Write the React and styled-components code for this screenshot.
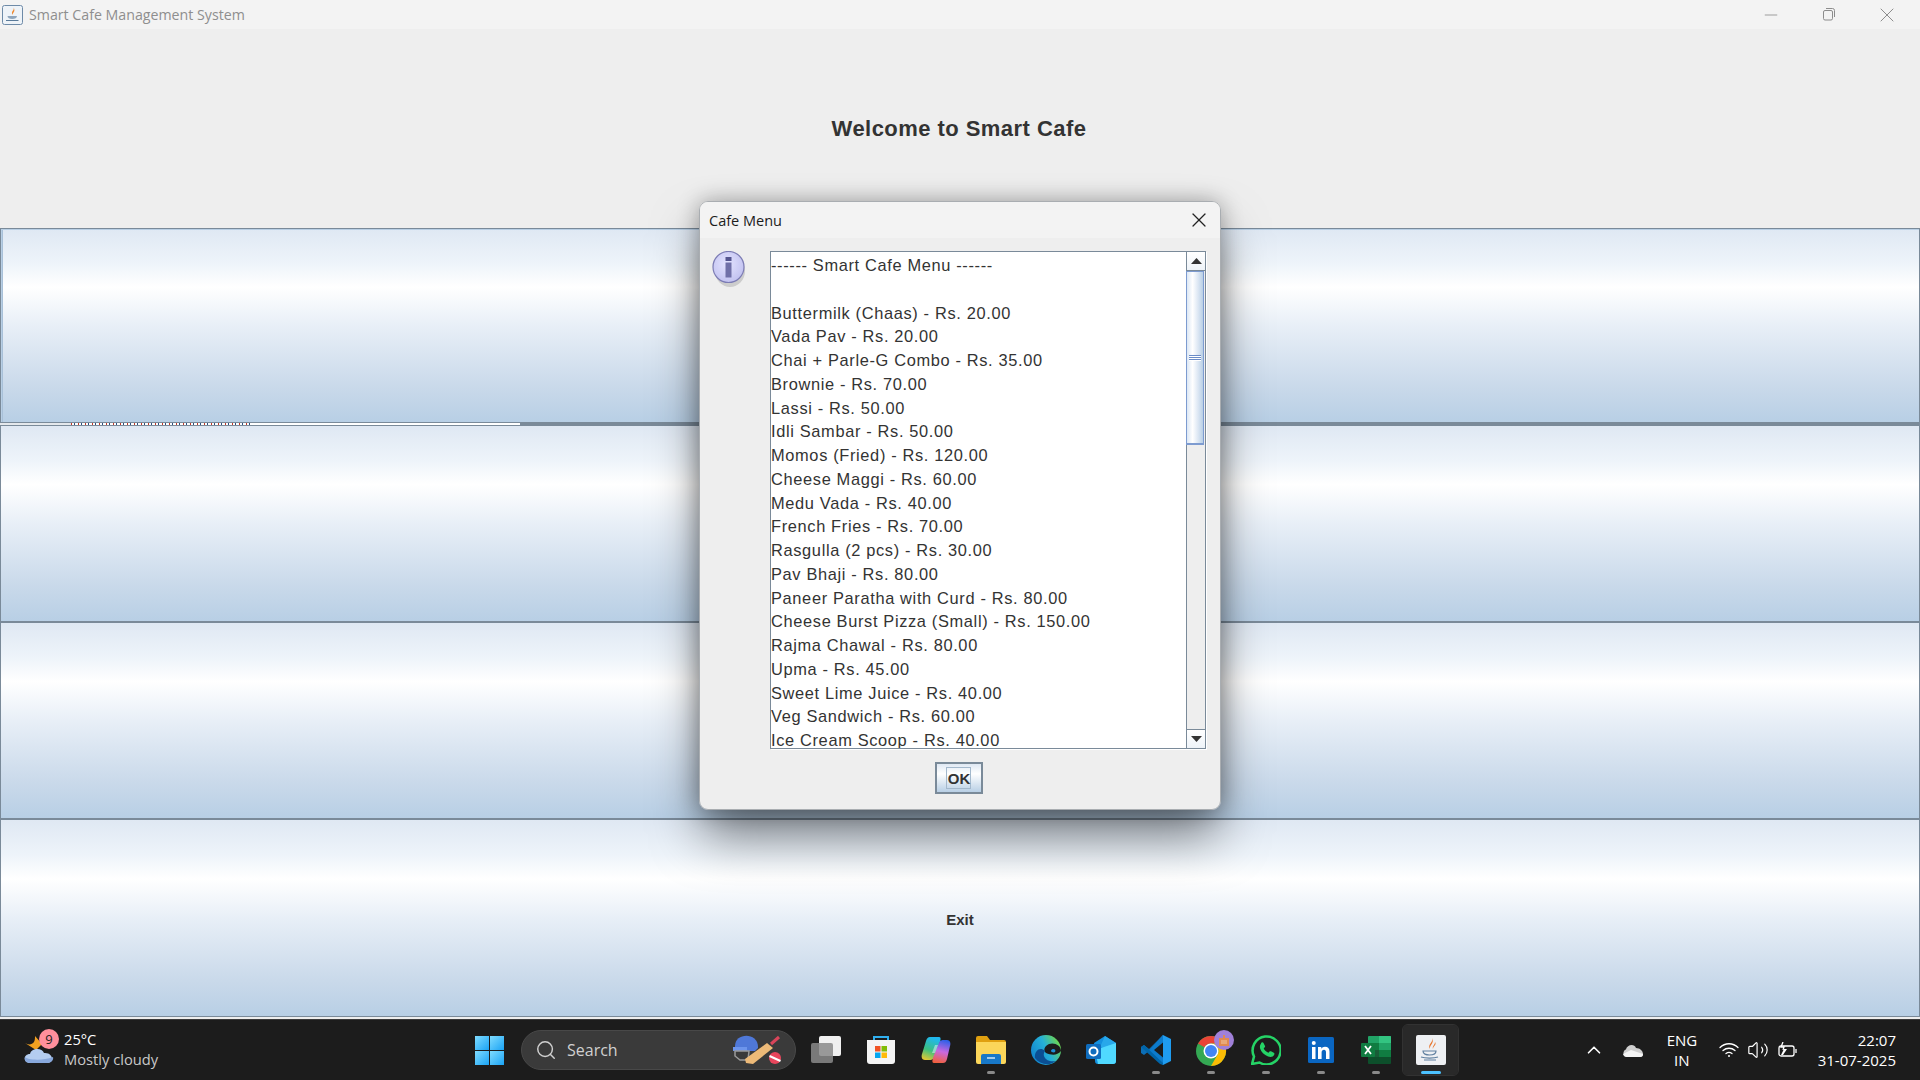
import React from "react";
import styled, { createGlobalStyle } from "styled-components";
import { X, Minus, Search as SearchIcon, ChevronUp, Volume2 } from "lucide-react";

const Global = createGlobalStyle`
  html, body { margin: 0; padding: 0; width: 1920px; height: 1080px; overflow: hidden; background: #eeeeee; }
  * { box-sizing: border-box; }
`;

const Screen = styled.div`
  width: 1920px; height: 1080px; display: flex; flex-direction: column; position: relative; overflow: hidden;
  font-family: "Liberation Sans", Arial, sans-serif;
`;
const TitleBar = styled.div`
  height: 29px; flex: none; background: #f3f3f3; display: flex; align-items: center; padding-left: 2px;
`;
const TitleText = styled.span`
  margin-left: 6px; font-family: "Open Sans", "Noto Sans", sans-serif; font-size: 14.2px; color: #8e8e8e;
`;
const WinControls = styled.div`
  margin-left: auto; display: flex; align-items: center; color: #8c8c8c; padding-right: 4px;
`;
const WinBtn = styled.div`
  width: 58px; height: 29px; display: flex; align-items: center; justify-content: center;
`;
const Content = styled.div`flex: 1; display: flex; flex-direction: column; min-height: 0; background: #eeeeee;`;
const Heading = styled.div`
  height: 199px; flex: none; display: flex; align-items: center; justify-content: center;
  font-size: 22px; font-weight: 700; color: #333333; padding-right: 2px;
  letter-spacing: 0.45px;
`;
const Metal = styled.div`
  height: ${p => p.$h}px; flex: none; display: flex; align-items: center; justify-content: center;
  border: 1px solid #7a8a99; padding-top: 3px;
  box-shadow: ${p => (p.$first ? "inset 1px 1px 0 #b8cfe5, inset 2px 0 0 #a8c0d8" : "none")};
  background: linear-gradient(to bottom, #dfe8f3 0%, #eef4fa 18%, #ffffff 30%, #e8eff7 50%, #c9d9ea 82%, #b8cfe5 100%);
  font-size: 15px; font-weight: 700; color: #333333;
`;
const Buttons = styled.div`display: flex; flex-direction: column;`;
const Strip = styled.div`height: 2px; flex: none; display: flex; background: #7a8a99;`;
const StripPart = styled.div`
  height: 2px; flex: none; width: ${p => p.$w}px;
  background: ${p => (p.$text
    ? "repeating-linear-gradient(to right, #c0392b 0 1px, #ffffff 1px 3px, #2c4f80 3px 4px, #ffffff 4px 7px)"
    : p.$dim ? "#e4e8ec" : "#ffffff")};
`;
const Dialog = styled.div`
  position: absolute; left: 699px; top: 201px; width: 522px; height: 609px;
  background: #eeeeee; border: 1px solid #a9adb1; border-radius: 9px; overflow: hidden;
  display: flex; flex-direction: column;
`;
const ShadowLayer = styled.div`
  position: absolute; left: 699px; top: 201px; width: 522px; height: 609px; border-radius: 9px;
  box-shadow: 0 28px 50px -4px rgba(0,0,0,0.5), 0 0 22px rgba(0,0,0,0.3);
`;
const DialogHead = styled.div`
  height: 36px; flex: none; background: #f3f3f3; display: flex; align-items: center; justify-content: space-between;
  padding: 0 9px 0 9px;
  font-family: "Open Sans", "Noto Sans", sans-serif; font-size: 14.5px; color: #1c1c1c;
`;
const DialogBody = styled.div`
  flex: 1; display: flex; min-height: 0; padding: 13px 14px 0 12px;
`;
const IconCol = styled.div`width: 58px; flex: none;`;
const Main = styled.div`flex: 1; min-width: 0; display: flex; flex-direction: column;`;
const ScrollPane = styled.div`
  width: 436px; height: 498px; flex: none; border: 1px solid #7a8a99; background: #fff; display: flex;
  box-shadow: 1px 1px 0 #ffffff;
`;
const TextArea = styled.div`
  flex: 1; overflow: hidden; padding: 2px 0 0 0; font-size: 16.4px; letter-spacing: 0.65px; color: #333333;
`;
const Line = styled.div`height: 23.75px; line-height: 23.75px; white-space: pre;`;
const ScrollBar = styled.div`
  width: 19px; flex: none; background: #eeeeee; border-left: 1px solid #7a8a99; display: flex; flex-direction: column;
`;
const Arrow = styled.div`
  height: 19px; flex: none; background: linear-gradient(to bottom, #ffffff, #eef3f8); display: flex; align-items: center; justify-content: center;
  border-bottom: ${p => (p.$down ? "none" : "1px solid #7a8a99")};
  border-top: ${p => (p.$down ? "1px solid #7a8a99" : "none")};
`;
const Thumb = styled.div`
  height: 174px; flex: none; border: 1px solid #7d9bd0; border-bottom-width: 2px;
  margin-left: -1px; width: 18px;
  background: linear-gradient(to right, #dde8f5 0%, #ffffff 35%, #dbe6f3 70%, #b8cfe5 100%);
  display: flex; flex-direction: column; align-items: center; justify-content: center; gap: 1px;
`;
const Grip = styled.div`width: 12px; height: 1px; background: #6a8cc8; box-shadow: 0 1px 0 #fff;`;
const Track = styled.div`flex: 1;`;
const OkRow = styled.div`
  height: 0; flex: 1; display: flex; align-items: flex-start; justify-content: center; padding: 13px 0 0 0; margin-left: -59px;
`;
const OkBtn = styled.div`
  width: 48px; height: 32px; border: 2px solid #7a8a99; display: flex; align-items: center; justify-content: center;
  background: linear-gradient(to bottom, #dfe8f3, #ffffff 35%, #b8cfe5);
`;
const OkText = styled.span`
  font-size: 15px; font-weight: 700; color: #333333; border: 1px solid #a3b8cc; padding: 3px 0 1px 1px; line-height: 16px;
`;
const Taskbar = styled.div`
  position: absolute; left: 0; right: 0; bottom: 0; height: 61px; background: #1c1c1c; border-top: 1px solid #3a3a3a;
  display: flex; align-items: center; font-family: "Open Sans", "Noto Sans", sans-serif; color: #fff;
`;
const Weather = styled.div`
  width: 470px; flex: none; padding-left: 24px; display: flex; align-items: center; position: relative;
`;
const WeatherText = styled.div`
  margin-left: 8px; display: flex; flex-direction: column; font-size: 14.7px; line-height: 20px; margin-top: -2px;
`;
const Sub = styled.span`color: #c8c8c8;`;
const Badge = styled.span`
  position: absolute; left: 39px; top: -2px; width: 20px; height: 20px; border-radius: 50%; background: #ff8f9c; color: #222;
  font-size: 13px; display: flex; align-items: center; justify-content: center;
`;
const WinLogo = styled.div`width: 30px; flex: none; margin-left: 5px; display: grid; grid-template-columns: 14px 14px; gap: 1px;`;
const Pane = styled.div`height: 14px; background: linear-gradient(135deg, #7fdcff, #1aa3f5);`;
const SearchBox = styled.div`
  width: 275px; height: 40px; margin-left: 16px; flex: none; border-radius: 20px; background: #3a3a3a; border: 1px solid #484848;
  display: flex; align-items: center; padding-left: 13px; color: #d0d0d0; font-size: 16px;
`;
const SearchLabel = styled.span`margin-left: 10px;`;
const SearchArt = styled.div`margin-left: auto; margin-right: 12px; display: flex;`;
const Icons = styled.div`display: flex; align-items: center; margin-left: 2px;`;
const Slot = styled.div`
  width: 55px; height: 50px; flex: none; display: flex; align-items: center; justify-content: center; position: relative;
  border-radius: 5px;
  ${p => p.$active ? "background:#292929; outline:1px solid #323232;" : ""}
`;
const Dot = styled.span`
  position: absolute; left: 50%; bottom: 1px; height: 3px; border-radius: 2px; transform: translateX(-50%);
  width: ${p => (p.$active ? "20px" : "8px")}; background: ${p => (p.$active ? "#4cc2ff" : "#8a8a8a")};
`;
const Tray = styled.div`
  margin-left: auto; display: flex; align-items: center; height: 100%; padding-right: 24px;
`;
const Lang = styled.div`
  width: 30px; text-align: center; font-size: 15px; line-height: 20px; margin-left: 24px; margin-right: 22px; margin-top: -1px;
`;
const TrayIcon = styled.div`display: flex; align-items: center; margin-right: ${p => p.$gap || 0}px;`;
const Clock = styled.div`
  margin-left: 20px; text-align: right; font-size: 15px; line-height: 20px; margin-top: -1px;
`;
const ChromeSvg = styled.svg`overflow: visible;`;

const menu = [
  "------ Smart Cafe Menu ------", " ", "Buttermilk (Chaas) - Rs. 20.00", "Vada Pav - Rs. 20.00",
  "Chai + Parle-G Combo - Rs. 35.00", "Brownie - Rs. 70.00", "Lassi - Rs. 50.00", "Idli Sambar - Rs. 50.00",
  "Momos (Fried) - Rs. 120.00", "Cheese Maggi - Rs. 60.00", "Medu Vada - Rs. 40.00", "French Fries - Rs. 70.00",
  "Rasgulla (2 pcs) - Rs. 30.00", "Pav Bhaji - Rs. 80.00", "Paneer Paratha with Curd - Rs. 80.00",
  "Cheese Burst Pizza (Small) - Rs. 150.00", "Rajma Chawal - Rs. 80.00", "Upma - Rs. 45.00",
  "Sweet Lime Juice - Rs. 40.00", "Veg Sandwich - Rs. 60.00", "Ice Cream Scoop - Rs. 40.00",
];

const JavaSmall = () => (
  <svg width="21" height="20" viewBox="0 0 21 20">
    <rect x="0.5" y="0.5" width="20" height="19" rx="2" fill="#eef3f8" stroke="#6e8ba8" />
    <path d="M11.500 2.500c1.500 2.500-3 3.500-1 7.500 .2-2.500 3.500-3.500 1-7.500z" fill="#ee8a32" />
    <path d="M5.500 11h9.500c0 2-2 3-4.800 3s-4.700-1-4.700-3z" fill="#8fa6bd" />
    <path d="M4 15.500h12.500" stroke="#5a7a99" strokeWidth="1" fill="none" />
  </svg>
);
const InfoIcon = () => (
  <svg width="38" height="40" viewBox="0 0 38 40">
    <defs>
      <radialGradient id="ig" cx="45%" cy="40%" r="60%">
        <stop offset="0" stopColor="#e4e4ff" /><stop offset="1" stopColor="#c2c2f0" />
      </radialGradient>
    </defs>
    <ellipse cx="18" cy="20" rx="15" ry="16" fill="#999" opacity="0.4" />
    <circle cx="16.500" cy="16" r="15.500" fill="url(#ig)" stroke="#7c7cb4" strokeWidth="1.200" />
    <rect x="13.500" y="6" width="6" height="4" fill="#55558f" />
    <rect x="13.500" y="11.500" width="6" height="15" fill="#7070a8" />
  </svg>
);
const Weathericon = () => (
  <svg width="32" height="32" viewBox="0 0 32 32">
    <path d="M1 9c3 2 7 2 9-1 1-2 1-4 1-6l7 8-6 6z" fill="#f0a020" />
    <path d="M6 29c-7 0-7-9 0-9 1-6 12-7 14-1 9-1 11 10 3 10z" fill="#b4cdf0" />
    <path d="M6 29c-5 0-6-4-5-6 2 3 18 4 28 0 1 3-2 6-6 6z" fill="#88a8dc" />
  </svg>
);
const CricketArt = () => (
  <svg width="52" height="32" viewBox="0 0 52 32">
    <path d="M4 12c0-14 24-14 23 2l-3 3H4z" fill="#4f78d8" />
    <path d="M2 13h14v4H2z" fill="#6d95ec" />
    <path d="M4 17h14l-1 9H9l-5-4z" fill="none" stroke="#9a9a9a" strokeWidth="1.500" />
    <path d="M14 25l22-16 6 5-20 16-7-1z" fill="#edba78" />
    <path d="M40 10l8-7" stroke="#d9455a" strokeWidth="3" />
    <circle cx="44" cy="24" r="6" fill="#e8465c" /><path d="M38.500 22l11 5" stroke="#fff" strokeWidth="2" />
  </svg>
);
const TaskView = () => (
  <svg width="30" height="30" viewBox="0 0 30 30">
    <rect x="8" y="1" width="22" height="20" rx="2" fill="#f0f0f0" />
    <rect x="0" y="8" width="22" height="20" rx="2" fill="#8a8a8a" opacity="0.85" />
  </svg>
);
const Store = () => (
  <svg width="30" height="30" viewBox="0 0 30 30">
    <path d="M8 5V2h14v3" fill="none" stroke="#30b0f0" strokeWidth="2" />
    <path d="M1 5h28v21a3 3 0 0 1-3 3H4a3 3 0 0 1-3-3z" fill="#f4f4f4" />
    <rect x="9" y="11" width="5.500" height="5.500" fill="#f05325" /><rect x="15.500" y="11" width="5.500" height="5.500" fill="#81bc06" />
    <rect x="9" y="17.500" width="5.500" height="5.500" fill="#05a6f0" /><rect x="15.500" y="17.500" width="5.500" height="5.500" fill="#ffba08" />
  </svg>
);
const Copilot = () => (
  <svg width="30" height="30" viewBox="0 0 30 30">
    <defs>
      <linearGradient id="cp1" x1="0.5" y1="0" x2="0.2" y2="1"><stop offset="0" stopColor="#20b8f0" /><stop offset="0.55" stopColor="#3cc080" /><stop offset="1" stopColor="#e8c830" /></linearGradient>
      <linearGradient id="cp2" x1="0.6" y1="0" x2="0.4" y2="1"><stop offset="0" stopColor="#3060e8" /><stop offset="0.5" stopColor="#c868e0" /><stop offset="1" stopColor="#f06040" /></linearGradient>
    </defs>
    <path d="M9 2h9c3 0 1 5 0 8l-5 12c-1 3-3 3-5 3H4c-3 0-4-3-3-6L5 6c1-3 2-4 4-4z" fill="url(#cp1)" />
    <path d="M22 28h-9c-3 0-1-5 0-8l5-12c1-3 3-3 5-3h3c3 0 4 3 3 6l-3 13c-1 3-2 4-4 4z" fill="url(#cp2)" />
    <path d="M17 10h-3l-3 8h3z" fill="#f0f4ff" opacity="0.5" />
  </svg>
);
const Folder = () => (
  <svg width="30" height="28" viewBox="0 0 30 28">
    <path d="M0 2a2 2 0 0 1 2-2h9l3 4h14a2 2 0 0 1 2 2v4H0z" fill="#e0a010" />
    <path d="M0 6h30v20a2 2 0 0 1-2 2H2a2 2 0 0 1-2-2z" fill="#fbd65a" />
    <path d="M5 20a2 2 0 0 1 2-2h16a2 2 0 0 1 2 2v8H5z" fill="#1878c8" />
    <path d="M11 22h8" stroke="#cfe8fa" strokeWidth="1.500" />
  </svg>
);
const Edge = () => (
  <svg width="30" height="30" viewBox="0 0 30 30">
    <defs>
      <linearGradient id="eg" x1="0" y1="0.8" x2="1" y2="0.3"><stop offset="0" stopColor="#1080cc" /><stop offset="0.55" stopColor="#25b0d8" /><stop offset="1" stopColor="#70d848" /></linearGradient>
    </defs>
    <circle cx="15" cy="15" r="15" fill="url(#eg)" />
    <path d="M30 16c0-6-7-9-12-7-5 2-6 7-3 9 5 2 11 3 15-2z" fill="#1c1c1c" />
    <path d="M14 16c-4 5 2 12 11 10-6 5-16 4-21-3-1-7 5-12 10-7z" fill="#0b4f94" />
    <path d="M22 14c2 0 3 1 2 3-1 1-4 0-4-1s1-2 2-2z" fill="#1c8fd8" />
  </svg>
);
const Outlook = () => (
  <svg width="30" height="28" viewBox="0 0 30 28">
    <path d="M8 7l11-7 11 7v18a3 3 0 0 1-3 3H12a3 3 0 0 1-3-3z" fill="#1490df" />
    <path d="M19 0l11 7-8 6-8-2z" fill="#28a8ea" />
    <path d="M9 14l21-7v18a3 3 0 0 1-3 3H12z" fill="#50d9ff" />
    <rect x="0" y="8" width="15" height="15" rx="1.500" fill="#0f6cbd" />
    <circle cx="7.500" cy="15.500" r="4" fill="none" stroke="#fff" strokeWidth="2" />
  </svg>
);
const VSCode = () => (
  <svg width="30" height="30" viewBox="0 0 30 30">
    <path d="M22 0l8 4v22l-8 4L8 16z" fill="#1f9cf0" />
    <path d="M22 0v30L8 16l-5 4-3-2v-6l3-2 5 4z" fill="#0a78c8" opacity="0.9" />
    <path d="M22 7.500v15L13 15z" fill="#1c1c1c" />
    <path d="M0 12l3-2 19 18v2l-3-1z" fill="#0065a9" />
  </svg>
);
const Chrome = () => (
  <ChromeSvg width="30" height="40" viewBox="0 0 30 40">
    <circle cx="15" cy="21" r="15" fill="#34a853" />
    <path d="M15 6a15 15 0 0 1 13 7.500H15a7.500 7.500 0 0 0-6.500 3.750L2 13.500A15 15 0 0 1 15 6z" fill="#ea4335" />
    <path d="M28 13.500a15 15 0 0 1-13 22.500l6.500-11.250A7.500 7.500 0 0 0 15 13.500z" fill="#fbbc05" />
    <circle cx="15" cy="21" r="7.500" fill="#fff" /><circle cx="15" cy="21" r="6" fill="#4285f4" />
    <circle cx="28" cy="10" r="10" fill="#a080d8" /><path d="M24 15v-6h8v6zM28 5v4" stroke="#e08a50" strokeWidth="2" fill="#e8a878" />
  </ChromeSvg>
);
const WhatsApp = () => (
  <svg width="30" height="30" viewBox="0 0 30 30">
    <path d="M1 29l2-7.500A14 14 0 1 1 8.500 27.500z" fill="#1c1c1c" stroke="#25d366" strokeWidth="2.500" />
    <path d="M10 8c1-1 2-1 2.500 0l1.500 3c.3.6 0 1-.5 1.500l-.8.9c1 2 2.700 3.500 4.800 4.400l1-1.200c.5-.5 1-.6 1.500-.3l2.800 1.400c.8.4.8 1.200.3 2.200-1 2-3.500 2.500-6 1.500-4-1.500-7-4.500-8-8-.5-2 0-4 1-5z" fill="#25d366" />
  </svg>
);
const LinkedIn = () => (
  <svg width="26" height="26" viewBox="0 0 26 26">
    <rect width="26" height="26" rx="1.500" fill="#0a66c2" />
    <rect x="4" y="10" width="3.500" height="12" fill="#fff" /><circle cx="5.750" cy="6" r="2" fill="#fff" />
    <path d="M10 10h3.300v1.700c.7-1.200 2-2 3.700-2 3 0 4.500 1.800 4.500 5V22H18v-6.500c0-1.800-.6-2.800-2-2.800s-2.400 1-2.400 2.800V22H10z" fill="#fff" />
  </svg>
);
const Excel = () => (
  <svg width="30" height="28" viewBox="0 0 30 28">
    <path d="M7 1a1 1 0 0 1 1-1h21a1 1 0 0 1 1 1v6H7z" fill="#21a366" />
    <path d="M18 0h11a1 1 0 0 1 1 1v6H18z" fill="#33c481" />
    <rect x="7" y="7" width="11" height="7" fill="#107c41" /><rect x="18" y="7" width="12" height="7" fill="#21a366" />
    <rect x="7" y="14" width="11" height="7" fill="#185c37" /><rect x="18" y="14" width="12" height="7" fill="#107c41" />
    <path d="M7 21h23v6a1 1 0 0 1-1 1H8a1 1 0 0 1-1-1z" fill="#0d4f2b" />
    <rect x="0" y="7" width="14" height="14" rx="1" fill="#107c41" />
    <path d="M4 10l6 8M10 10l-6 8" stroke="#fff" strokeWidth="1.800" />
  </svg>
);
const JavaBig = () => (
  <svg width="30" height="30" viewBox="0 0 30 30">
    <rect width="30" height="30" rx="2" fill="#eef0f3" />
    <path d="M16 3c2 4-5 6-2 11-1-4 5-6 2-11zM19 7c0 3-3 4-2 7 0-3 4-4 2-7z" fill="#e8742a" />
    <path d="M7 16h13c0 3-3 4-6.500 4S7 19 7 16zM5 22c4 1.500 13 1.500 17 0M8 25h12" stroke="#5f7f9f" strokeWidth="1.200" fill="none" />
  </svg>
);
const Restore = () => (
  <svg width="12" height="13" viewBox="0 0 12 13" fill="none" stroke="#8c8c8c" strokeWidth="1">
    <rect x="0.500" y="2.500" width="9" height="9.500" rx="1.500" />
    <path d="M3 .5h6.500a2 2 0 0 1 2 2V9" />
  </svg>
);
const Wifi = () => (
  <svg width="20" height="16" viewBox="0 0 20 16" fill="none" stroke="#fff" strokeWidth="1.300" strokeLinecap="round">
    <path d="M1 5.500c5-5 13-5 18 0M4 8.500c3.500-3 8.500-3 12 0M7 11.500c2-1.500 4-1.500 6 0" /><circle cx="10" cy="14" r="1" fill="#fff" stroke="none" />
  </svg>
);
const Battery = () => (
  <svg width="20" height="16" viewBox="0 0 20 16" fill="none" stroke="#fff" strokeWidth="1.300">
    <rect x="1" y="4" width="15" height="10" rx="2" /><path d="M18 7v4" />
    <path d="M3 13l3-6h3l-4 6z" fill="#fff" stroke="none" /><path d="M5 0L3 5h3l-1 3" />
  </svg>
);
const Cloud = () => (
  <svg width="20" height="13" viewBox="0 0 20 13">
    <path d="M4 13a4 4 0 0 1-1-7.700C4 1 11-1 13 4c4 0 7 3 7 6 0 2-1 3-3 3z" fill="#cfcfcf" />
    <path d="M4 13a4 4 0 0 1-4-3l8-4 12 4c0 2-1 3-3 3z" fill="#f4f4f4" />
  </svg>
);

const apps = [[Folder, true], [Edge], [Outlook], [VSCode, true], [Chrome, true], [WhatsApp, true], [LinkedIn, true], [Excel, true]];

export default function App() {
  return (
    <Screen>
      <Global />
      <TitleBar>
        <JavaSmall />
        <TitleText>Smart Cafe Management System</TitleText>
        <WinControls>
          <WinBtn><Minus size={20} strokeWidth={1} /></WinBtn>
          <WinBtn><Restore /></WinBtn>
          <WinBtn><X size={24} strokeWidth={1} /></WinBtn>
        </WinControls>
      </TitleBar>
      <Content>
        <Heading>Welcome to Smart Cafe</Heading>
        <Buttons>
          <Metal $first $h={195} />
          <Strip>
            <StripPart $w={71} $dim />
            <StripPart $w={182} $text />
            <StripPart $w={267} />
          </Strip>
          <Metal $h={197} />
          <Metal $h={197} />
          <Metal $h={198}>Exit</Metal>
        </Buttons>
      </Content>
      <ShadowLayer />
      <Dialog>
        <DialogHead>
          Cafe Menu
          <X size={24} strokeWidth={1.2} color="#222" />
        </DialogHead>
        <DialogBody>
          <IconCol><InfoIcon /></IconCol>
          <Main>
            <ScrollPane>
              <TextArea>
                {menu.map((m, i) => <Line key={i}>{m}</Line>)}
              </TextArea>
              <ScrollBar>
                <Arrow>
                  <svg width="11" height="6" viewBox="0 0 11 6"><path d="M5.500 0L11 6H0z" fill="#333" /></svg>
                </Arrow>
                <Thumb><Grip /><Grip /><Grip /></Thumb>
                <Track />
                <Arrow $down>
                  <svg width="11" height="6" viewBox="0 0 11 6"><path d="M0 0h11L5.500 6z" fill="#333" /></svg>
                </Arrow>
              </ScrollBar>
            </ScrollPane>
            <OkRow><OkBtn><OkText>OK</OkText></OkBtn></OkRow>
          </Main>
        </DialogBody>
      </Dialog>
      <Taskbar>
        <Weather>
          <Weathericon />
          <Badge>9</Badge>
          <WeatherText>
            <span>25°C</span>
            <Sub>Mostly cloudy</Sub>
          </WeatherText>
        </Weather>
        <WinLogo><Pane /><Pane /><Pane /><Pane /></WinLogo>
        <SearchBox>
          <SearchIcon size={22} strokeWidth={1.6} />
          <SearchLabel>Search</SearchLabel>
          <SearchArt><CricketArt /></SearchArt>
        </SearchBox>
        <Icons>
          <Slot><TaskView /></Slot>
          <Slot><Store /></Slot>
          <Slot><Copilot /></Slot>
          {apps.map(([C, dot], i) => (
            <Slot key={i}><C />{dot && <Dot />}</Slot>
          ))}
          <Slot $active><JavaBig /><Dot $active /></Slot>
        </Icons>
        <Tray>
          <TrayIcon $gap={18}><ChevronUp size={22} strokeWidth={1.8} /></TrayIcon>
          <TrayIcon><Cloud /></TrayIcon>
          <Lang>ENG<br />IN</Lang>
          <TrayIcon $gap={8}><Wifi /></TrayIcon>
          <TrayIcon $gap={9}><Volume2 size={22} strokeWidth={1.3} /></TrayIcon>
          <TrayIcon><Battery /></TrayIcon>
          <Clock>22:07<br />31-07-2025</Clock>
        </Tray>
      </Taskbar>
    </Screen>
  );
}
